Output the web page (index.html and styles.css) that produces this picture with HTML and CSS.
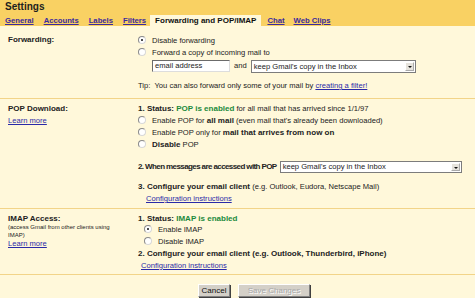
FILE: index.html
```html
<!DOCTYPE html>
<html>
<head>
<meta charset="utf-8">
<link rel="stylesheet" href="styles.css">
</head>
<body>
<div class="top">
  <div class="title">Settings</div>
  <div class="tabs">
    <a class="tab" href="#">General</a>
    <a class="tab" href="#">Accounts</a>
    <a class="tab" href="#">Labels</a>
    <a class="tab" href="#">Filters</a>
    <span class="tab active">Forwarding and POP/IMAP</span>
    <a class="tab chat" href="#">Chat</a>
    <a class="tab" href="#">Web Clips</a>
  </div>
</div>

<div class="section fwd">
  <div class="label"><b>Forwarding:</b></div>
  <div class="content">
    <div class="line"><span class="radio on"></span>Disable forwarding</div>
    <div class="line"><span class="radio"></span>Forward a copy of incoming mail to</div>
    <div class="line inputs">
      <span class="textbox">email address</span>
      <span class="and">and</span>
      <span class="select sel1"><span class="val">keep Gmail's copy in the Inbox</span><span class="arrow"></span></span>
    </div>
    <div class="line tip">Tip:&nbsp; You can also forward only some of your mail by <a href="#">creating a filter!</a></div>
  </div>
</div>

<div class="section pop">
  <div class="label">
    <div class="line"><b>POP Download:</b></div>
    <div class="line"><a href="#">Learn more</a></div>
  </div>
  <div class="content">
    <div class="line"><b>1. Status: <span class="green">POP is enabled</span></b> for all mail that has arrived since 1/1/97</div>
    <div class="line"><span class="radio"></span>Enable POP for <b>all mail</b> (even mail that's already been downloaded)</div>
    <div class="line"><span class="radio"></span>Enable POP only for <b>mail that arrives from now on</b></div>
    <div class="line"><span class="radio"></span><b>Disable</b> POP</div>
    <div class="line when"><b class="tight">2. When messages are accessed with POP</b>
      <span class="select sel2"><span class="val">keep Gmail's copy in the Inbox</span><span class="arrow"></span></span>
    </div>
    <div class="line conf"><b>3. Configure your email client</b> (e.g. Outlook, Eudora, Netscape Mail)</div>
    <div class="line cfg"><a href="#">Configuration instructions</a></div>
  </div>
</div>

<div class="section imap">
  <div class="label">
    <div class="line"><b>IMAP Access:</b></div>
    <div class="small">(access Gmail from other clients using IMAP)</div>
    <div class="line"><a href="#">Learn more</a></div>
  </div>
  <div class="content">
    <div class="iline"><b>1. Status: <span class="green">IMAP is enabled</span></b></div>
    <div class="line ind"><span class="radio on"></span>Enable IMAP</div>
    <div class="line ind"><span class="radio"></span>Disable IMAP</div>
    <div class="iline"><b>2. Configure your email client (e.g. Outlook, Thunderbird, iPhone)</b></div>
    <div class="iline cfg2"><a href="#">Configuration instructions</a></div>
  </div>
</div>

<div class="buttons">
  <span class="btn">Cancel</span>
  <span class="btn disabled">Save Changes</span>
</div>
</body>
</html>
```

FILE: styles.css
```css
html, body {
  margin: 0;
  padding: 0;
}
body {
  width: 475px;
  height: 298px;
  overflow: hidden;
  background: #fff8da;
  font-family: "Liberation Sans", Arial, sans-serif;
  font-size: 7.6px;
  color: #222;
}
a {
  color: #2a2aa8;
  text-decoration: underline;
}
b {
  font-weight: bold;
}
.top {
  background: #f9d163;
  height: 26px;
}
.title {
  height: 14px;
  line-height: 14px;
  padding-left: 5px;
  font-size: 10px;
  font-weight: bold;
  color: #1e1e1e;
}
.tabs {
  display: flex;
  height: 11px;
  margin-top: 1px;
  padding-left: 5px;
  align-items: stretch;
}
.tab {
  font-size: 7.7px;
  font-weight: bold;
  line-height: 11px;
  color: #3a2a9e;
  margin-right: 10px;
}
.tab.active {
  font-size: 8px;
  background: #fff8da;
  color: #111;
  padding: 0 5px;
  margin-left: -6px;
  margin-right: 6px;
}
.tab.chat {
  margin-right: 9px;
}
.section {
  display: flex;
  border-bottom: 1px solid #f2d488;
}
.label {
  width: 130px;
  padding-left: 8px;
  flex: none;
}
.label b {
  font-size: 8px;
}
.content {
  flex: 1;
}
.line {
  height: 12px;
  line-height: 12px;
  white-space: nowrap;
}
.iline {
  height: 11.4px;
  line-height: 11.4px;
  white-space: nowrap;
}
.content b {
  font-size: 8px;
}
.content b.tight {
  letter-spacing: -0.6px;
}
.green {
  color: #1c8a3c;
}
.radio {
  display: inline-block;
  width: 6px;
  height: 6px;
  border-radius: 50%;
  background: #fff;
  border: 1px solid #8a8a8a;
  border-bottom-color: #d8d8d8;
  border-right-color: #d8d8d8;
  margin-right: 6px;
  vertical-align: -1px;
  position: relative;
}
.radio.on::after {
  content: "";
  position: absolute;
  left: 2px;
  top: 2px;
  width: 2px;
  height: 2px;
  border-radius: 50%;
  background: #111;
}
.ind {
  padding-left: 6px;
}
/* forwarding */
.fwd {
  padding-top: 9px;
  padding-bottom: 6px;
}
.fwd .label b {
  line-height: 10px;
  display: block;
}
.inputs {
  height: 14px;
  display: flex;
  align-items: center;
  padding-left: 14px;
}
.textbox {
  width: 74px;
  height: 10px;
  line-height: 10px;
  background: #fff;
  border: 1px solid #ddd;
  border-top-color: #6b6b6b;
  border-left-color: #6b6b6b;
  padding-left: 2px;
}
.and {
  margin: 0 4px 0 4px;
}
.select {
  display: inline-flex;
  flex: none;
  background: #fff;
  border: 1px solid #7c7c7c;
  height: 12px;
  box-sizing: border-box;
  align-items: stretch;
  vertical-align: middle;
}
.select .val {
  flex: 1;
  padding-left: 2px;
  line-height: 10px;
}
.select .arrow {
  width: 9px;
  flex: none;
  margin: 1px;
  background: #e6e3dc;
  border: 1px solid #aaa;
  border-top-color: #fff;
  border-left-color: #fff;
  box-sizing: border-box;
  position: relative;
}
.select .arrow::after {
  content: "";
  position: absolute;
  left: 2px;
  top: 3px;
  border-left: 2px solid transparent;
  border-right: 2px solid transparent;
  border-top: 2px solid #111;
}
.sel1 {
  width: 165px;
  height: 13px;
}
.sel1 .val {
  line-height: 11px;
}
.tip {
  margin-top: 7px;
}
/* pop */
.pop {
  padding-top: 4px;
  padding-bottom: 3px;
}
.when {
  margin-top: 9px;
  height: 13px;
  display: flex;
  align-items: center;
}
.sel2 {
  width: 182px;
  margin-left: 3px;
}
.conf {
  margin-top: 8px;
}
.cfg {
  padding-left: 8px;
}
/* imap */
.imap {
  padding-top: 4px;
  padding-bottom: 3px;
}
.small {
  font-size: 6px;
  line-height: 8px;
  width: 110px;
  margin-top: -1px;
  margin-bottom: -1px;
}
.imap .label .line {
  height: 11px;
  line-height: 11px;
}
.cfg2 {
  padding-left: 3px;
}
/* buttons */
.buttons {
  display: flex;
  gap: 8px;
  padding-top: 9px;
  padding-left: 198px;
}
.btn {
  height: 13px;
  line-height: 11px;
  box-sizing: border-box;
  background: #d4d0c8;
  border: 1px solid #808080;
  border-top-color: #fff;
  border-left-color: #fff;
  box-shadow: 1px 1px 0 #404040;
  font-size: 8px;
  text-align: center;
  color: #111;
}
.btn:first-child {
  width: 32px;
}
.btn.disabled {
  width: 72px;
  color: #a8a8a8;
  text-shadow: 1px 1px 0 #fff;
}
```
